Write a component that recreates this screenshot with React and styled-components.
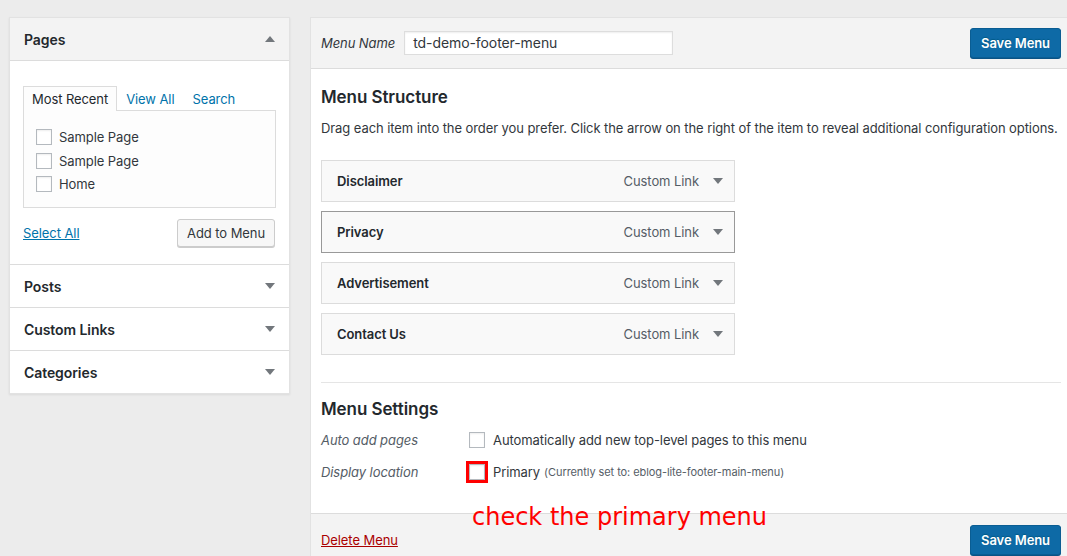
import styled, { createGlobalStyle } from 'styled-components';

const GlobalStyle = createGlobalStyle`
  html, body {
    margin: 0;
    padding: 0;
    background: #ececec;
    overflow: hidden;
  }
  body {
    font-family: Inter, "Liberation Sans", sans-serif;
    font-size: 13px;
    letter-spacing: -0.08px;
    color: #23282d;
  }
`;

const Page = styled.div`
  display: flex;
  align-items: flex-start;
  gap: 20px;
  padding: 17px 0 0 9px;
  width: 1100px;
`;

const SidePanel = styled.aside`
  width: 279px;
  flex-shrink: 0;
  background: #fff;
  border: 1px solid #e2e2e2;
  box-shadow: 0 1px 2px rgba(0, 0, 0, 0.08);
`;

const Section = styled.div`
  border-top: ${p => (p.$first ? 'none' : '1px solid #dcdcdc')};
`;

const SectionHead = styled.div`
  display: flex;
  align-items: center;
  justify-content: space-between;
  height: 42px;
  padding: 0 14px;
  background: ${p => (p.$open ? '#f3f3f3' : '#fff')};
  border-bottom: ${p => (p.$open ? '1px solid #dcdcdc' : 'none')};
`;

const SectionTitle = styled.h3`
  margin: 0;
  font-size: 14px;
  font-weight: 600;
  color: #23282d;
`;

const Caret = styled.span`
  width: 0;
  height: 0;
  border-left: 5px solid transparent;
  border-right: 5px solid transparent;
  ${p =>
    p.$up
      ? 'border-bottom: 6px solid #72777c;'
      : 'border-top: 6px solid #72777c;'}
`;

const SectionBody = styled.div`
  padding: 25px 13px 17px 13px;
`;

const Tabs = styled.div`
  display: flex;
  align-items: flex-end;
`;

const Tab = styled.span`
  height: 24px;
  line-height: 24px;
  padding: 0 8px;
  font-size: 13px;
  color: ${p => (p.$active ? '#23282d' : '#0073aa')};
  background: ${p => (p.$active ? '#fdfdfd' : 'transparent')};
  border: 1px solid ${p => (p.$active ? '#dcdcdc' : 'transparent')};
  border-bottom: none;
  margin-bottom: -1px;
  position: relative;
`;

const TabPanel = styled.div`
  border: 1px solid #dcdcdc;
  background: #fdfdfd;
  padding: 18px 12px 0;
  box-sizing: border-box;
  height: 98px;
  display: flex;
  flex-direction: column;
  gap: 7.5px;
`;

const CheckRow = styled.label`
  display: flex;
  align-items: center;
  gap: 7px;
  font-size: 13px;
  color: #32373c;
  height: 16px;
`;

const Box = styled.span`
  display: inline-block;
  width: 16px;
  height: 16px;
  box-sizing: border-box;
  border: 1px solid #b4b9be;
  background: #fff;
  box-shadow: inset 0 1px 2px rgba(0, 0, 0, 0.07);
  flex-shrink: 0;
  ${p => p.$marked && 'outline: 3px solid #f00; outline-offset: 0;'}
`;

const ActionsRow = styled.div`
  display: flex;
  align-items: center;
  justify-content: space-between;
  margin-top: 11px;
`;

const TextLink = styled.a`
  color: ${p => (p.$danger ? '#a00' : '#0073aa')};
  text-decoration: underline;
  font-size: 13px;
`;

const SecondaryButton = styled.button`
  height: 28px;
  padding: 0 9px;
  margin-right: 1px;
  font-family: inherit;
  letter-spacing: inherit;
  font-size: 13px;
  color: #32373c;
  background: #f7f7f7;
  border: 1px solid #ccc;
  border-radius: 3px;
  box-shadow: 0 1px 0 #ccc;
`;

const MainPanel = styled.section`
  width: 760px;
  flex-shrink: 0;
  background: #fff;
  border: 1px solid #e2e2e2;
  border-right: none;
`;

const Header = styled.div`
  display: flex;
  align-items: center;
  justify-content: space-between;
  height: 50px;
  padding: 0 10px;
  background: #f3f3f3;
  border-bottom: 1px solid #dcdcdc;
`;

const NameField = styled.label`
  display: flex;
  align-items: center;
  gap: 9px;
  font-style: italic;
  color: #32373c;
`;

const NameInput = styled.div`
  width: 269px;
  height: 24px;
  box-sizing: border-box;
  border: 1px solid #ddd;
  background: #fff;
  box-shadow: inset 0 1px 2px rgba(0, 0, 0, 0.07);
  padding: 0 8px;
  line-height: 22px;
  font-style: normal;
  font-size: 14px;
  color: #32373c;
`;

const PrimaryButton = styled.button`
  height: 30px;
  padding: 0 10px;
  font-family: inherit;
  letter-spacing: inherit;
  font-size: 13px;
  font-weight: 600;
  color: #fff;
  background: #0e6aa6;
  border: 1px solid #0a5d93;
  border-radius: 3px;
  box-shadow: 0 1px 0 #0a5386;
  text-shadow: 0 -1px 1px #005a87;
`;

const Body = styled.div`
  padding: 10px 10px 0 10px;
`;

const Heading = styled.h2`
  margin: ${p => (p.$first ? '6px' : '14px')} 0 0;
  font-size: 17px;
  font-weight: 600;
  color: #23282d;
  line-height: 24px;
`;

const Description = styled.p`
  margin: 10px 0 0;
  font-size: 13px;
  line-height: 18px;
  color: #32373c;
  white-space: nowrap;
`;

const Items = styled.ul`
  list-style: none;
  margin: 23px 0 0;
  padding: 0;
  display: flex;
  flex-direction: column;
  gap: 9px;
  width: 414px;
`;

const Item = styled.li`
  display: flex;
  align-items: center;
  height: 40px;
  padding: 0 11px 0 15px;
  background: #f9f9f9;
  border: 1px solid ${p => (p.$hover ? '#999' : '#dcdcdc')};
`;

const ItemTitle = styled.span`
  flex: 1;
  font-size: 13px;
  font-weight: 600;
  color: #23282d;
`;

const ItemType = styled.span`
  font-size: 13px;
  color: #555d66;
  margin-right: 14px;
`;

const Divider = styled.hr`
  border: none;
  border-top: 1px solid #e5e5e5;
  margin: 27px 0 0;
`;

const Settings = styled.div`
  display: grid;
  grid-template-columns: 148px 1fr;
  row-gap: 16px;
  margin-top: 11px;
  padding-bottom: 33px;
  align-items: center;
`;

const SettingLabel = styled.span`
  font-style: italic;
  color: #555d66;
`;

const SettingValue = styled.span`
  display: flex;
  align-items: center;
  gap: 8px;
  color: #32373c;
  position: relative;
`;

const Note = styled.small`
  font-size: 11px;
  color: #555d66;
  margin-left: -4px;
`;

const Annotation = styled.span`
  position: absolute;
  left: 3px;
  top: 39px;
  font-family: "DejaVu Sans", Verdana, sans-serif;
  font-size: 24px;
  letter-spacing: 0;
  color: #f00;
  white-space: nowrap;
  z-index: 2;
`;

const Footer = styled.div`
  display: flex;
  align-items: center;
  justify-content: space-between;
  height: 52px;
  padding: 0 10px;
  background: #f3f3f3;
  border-top: 1px solid #dcdcdc;
`;

const recent = ['Sample Page', 'Sample Page', 'Home'];
const closedSections = ['Posts', 'Custom Links', 'Categories'];
const menuItems = ['Disclaimer', 'Privacy', 'Advertisement', 'Contact Us'];

export default function App() {
  return (
    <>
      <GlobalStyle />
      <Page>
        <SidePanel>
          <Section $first>
            <SectionHead $open>
              <SectionTitle>Pages</SectionTitle>
              <Caret $up />
            </SectionHead>
            <SectionBody>
              <Tabs>
                <Tab $active>Most Recent</Tab>
                <Tab>View All</Tab>
                <Tab>Search</Tab>
              </Tabs>
              <TabPanel>
                {recent.map((name, i) => (
                  <CheckRow key={i}>
                    <Box />
                    {name}
                  </CheckRow>
                ))}
              </TabPanel>
              <ActionsRow>
                <TextLink href="#">Select All</TextLink>
                <SecondaryButton>Add to Menu</SecondaryButton>
              </ActionsRow>
            </SectionBody>
          </Section>
          {closedSections.map(name => (
            <Section key={name}>
              <SectionHead>
                <SectionTitle>{name}</SectionTitle>
                <Caret />
              </SectionHead>
            </Section>
          ))}
        </SidePanel>

        <MainPanel>
          <Header>
            <NameField>
              Menu Name
              <NameInput>td-demo-footer-menu</NameInput>
            </NameField>
            <PrimaryButton>Save Menu</PrimaryButton>
          </Header>
          <Body>
            <Heading $first>Menu Structure</Heading>
            <Description>
              Drag each item into the order you prefer. Click the arrow on the right of the item to reveal additional configuration options.
            </Description>
            <Items>
              {menuItems.map(name => (
                <Item key={name} $hover={name === 'Privacy'}>
                  <ItemTitle>{name}</ItemTitle>
                  <ItemType>Custom Link</ItemType>
                  <Caret />
                </Item>
              ))}
            </Items>
            <Divider />
            <Heading>Menu Settings</Heading>
            <Settings>
              <SettingLabel>Auto add pages</SettingLabel>
              <SettingValue>
                <Box />
                Automatically add new top-level pages to this menu
              </SettingValue>
              <SettingLabel>Display location</SettingLabel>
              <SettingValue>
                <Box $marked />
                Primary
                <Note>(Currently set to: eblog-lite-footer-main-menu)</Note>
                <Annotation>check the primary menu</Annotation>
              </SettingValue>
            </Settings>
          </Body>
          <Footer>
            <TextLink $danger href="#">Delete Menu</TextLink>
            <PrimaryButton>Save Menu</PrimaryButton>
          </Footer>
        </MainPanel>
      </Page>
    </>
  );
}
